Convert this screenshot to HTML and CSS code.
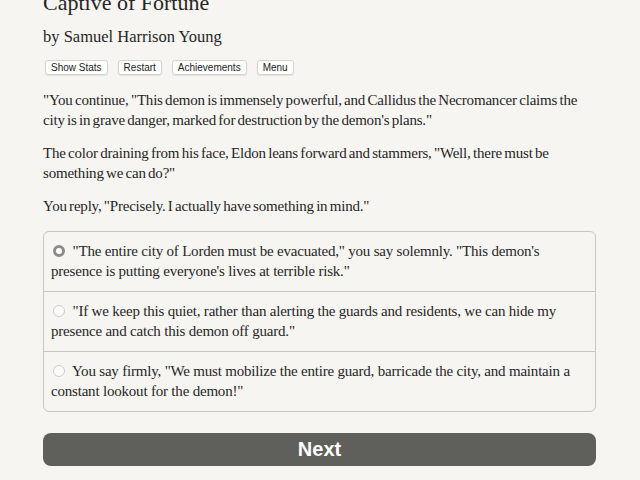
FILE: index.html
```html
<!DOCTYPE html>
<html lang="en">
<head>
  <meta charset="UTF-8" />
  <title>Captive of Fortune</title>
  <link rel="stylesheet" href="styles.css">
</head>
<body>
  <div class="container">
    <h1 class="title">Captive of Fortune</h1>
    <h2 class="author">by Samuel Harrison Young</h2>
    <div class="buttons">
      <button class="spacedLink">Show Stats</button>
      <button class="spacedLink">Restart</button>
      <button class="spacedLink">Achievements</button>
      <button class="spacedLink">Menu</button>
    </div>

    <div class="text">
      <p>"You continue, "This demon is immensely powerful, and Callidus the Necromancer claims the city is in grave danger, marked for destruction by the demon's plans."</p>
      <p>The color draining from his face, Eldon leans forward and stammers, "Well, there must be something we can do?"</p>
      <p>You reply, "Precisely. I actually have something in mind."</p>
    </div>

    <form class="choices">
      <label class="choice">
        <input type="radio" name="choice" checked>
        "The entire city of Lorden must be evacuated," you say solemnly. "This demon's presence is putting everyone's lives at terrible risk."
      </label>
      <label class="choice">
        <input type="radio" name="choice">
        "If we keep this quiet, rather than alerting the guards and residents, we can hide my presence and catch this demon off guard."
      </label>
      <label class="choice">
        <input type="radio" name="choice">
        You say firmly, "We must mobilize the entire guard, barricade the city, and maintain a constant lookout for the demon!"
      </label>
    </form>

    <button class="next">Next</button>
  </div>
</body>
</html>
```

FILE: styles.css
```css
body {
  margin: 0;
  padding: 0;
  background-color: #f7f5f2;
  color: #262626;
  font-family: "Liberation Serif", serif;
}
.container {
  width: 553px;
  margin: 0 0 0 43px;
}
.title {
  font-size: 22px;
  font-weight: normal;
  margin: -11px 0 0 0;
  line-height: 28px;
}
.author {
  font-size: 16.5px;
  font-weight: normal;
  margin: 10px 0 0 0;
  line-height: 20px;
}
.buttons {
  display: flex;
  gap: 10px;
  margin-top: 13px;
  padding-left: 2px;
}
.spacedLink {
  font-family: "Liberation Sans", Arial, sans-serif;
  font-size: 10px;
  color: #222;
  background: #fff;
  border: 1px solid #d6d4d1;
  border-radius: 3px;
  padding: 1px 5px;
  height: 15px;
  line-height: 11px;
  box-shadow: 0 1px 1px rgba(0, 0, 0, 0.08);
}
.text {
  margin-top: 16px;
}
.text p {
  font-size: 15px;
  letter-spacing: -0.2px;
  word-spacing: -1.2px;
  line-height: 19.5px;
  margin: 0 0 14px 0;
}
.choices {
  border: 1px solid #c8c6c3;
  border-radius: 6px;
}
.choice {
  display: block;
  font-size: 15px;
  letter-spacing: -0.2px;
  line-height: 20px;
  padding: 9px 7px 10px 7px;
  border-top: 1px solid #c8c6c3;
}
.choice:first-child {
  border-top: none;
}
/* gray radios like the game's own skin */
.choice input {
  appearance: none;
  -webkit-appearance: none;
  box-sizing: border-box;
  margin: 0 4px 0 2px;
  width: 12px;
  height: 12px;
  border-radius: 50%;
  border: 1px solid #d0cecb;
  background: #fcfbfa;
  vertical-align: -1px;
}
.choice input:checked {
  border: 3.5px solid #8c8b89;
  background: #fff;
}
.next {
  display: block;
  width: 100%;
  height: 33px;
  margin-top: 21px;
  background-color: #5f5f5c;
  color: #fff;
  border: none;
  border-radius: 8px;
  font-family: "Liberation Sans", Arial, sans-serif;
  font-weight: bold;
  font-size: 20px;
}
```
